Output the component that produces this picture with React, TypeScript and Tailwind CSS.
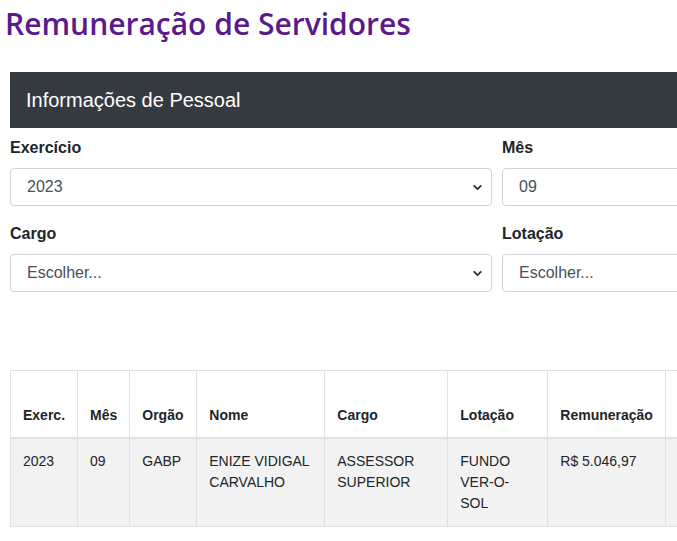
import { ChevronDown } from "lucide-react";

const rows = [
  {
    exerc: "2023",
    mes: "09",
    orgao: "GABP",
    nome: "ENIZE VIDIGAL CARVALHO",
    cargo: "ASSESSOR SUPERIOR",
    lotacao: "FUNDO VER-O-SOL",
    remuneracao: "R$ 5.046,97",
  },
];

function FakeSelect({ value }: { value: string }) {
  return (
    <div className="flex h-[38px] w-[482px] items-center justify-between rounded-[4px] border border-[#ced4da] bg-white pl-[16px] pr-[7px] text-[16px] text-[#495057]">
      <span>{value}</span>
      <ChevronDown className="h-[13px] w-[13px] text-[#333]" strokeWidth={3.5} />
    </div>
  );
}

function Field({ label, value }: { label: string; value: string }) {
  return (
    <div className="flex flex-col">
      <label className="mb-[8px] text-[16px] font-bold leading-[24px] text-[#212529]">
        {label}
      </label>
      <FakeSelect value={value} />
    </div>
  );
}

export default function App() {
  return (
    <div className="h-[541px] w-[677px] overflow-hidden bg-white font-['Liberation_Sans',Arial,sans-serif] text-[#212529]">
      <h1 className="ml-[5px] pt-[5px] font-['Open_Sans',sans-serif] text-[30px] font-semibold leading-[38px] text-[#5a1a8c]">
        Remuneração de Servidores
      </h1>

      <div className="ml-[10px] mt-[29px] w-[1000px]">
        <div className="flex h-[56px] items-center bg-[#343a40] px-[16px] text-[20px] text-white">
          Informações de Pessoal
        </div>

        <div className="mt-[8px] grid grid-cols-[482px_482px] gap-x-[10px] gap-y-[16px]">
          <Field label="Exercício" value="2023" />
          <Field label="Mês" value="09" />
          <Field label="Cargo" value="Escolher..." />
          <Field label="Lotação" value="Escolher..." />
        </div>

        <table className="mt-[78px] border-collapse text-[14px] leading-[21px]">
          <thead>
            <tr className="h-[67px] bg-white">
              <th className="w-[67px] border border-b-2 border-[#dee2e6] px-[12px] pb-[11px] text-left align-bottom">Exerc.</th>
              <th className="w-[52px] border border-b-2 border-[#dee2e6] px-[12px] pb-[11px] text-left align-bottom">Mês</th>
              <th className="w-[67px] border border-b-2 border-[#dee2e6] px-[12px] pb-[11px] text-left align-bottom">Orgão</th>
              <th className="w-[128px] border border-b-2 border-[#dee2e6] px-[12px] pb-[11px] text-left align-bottom">Nome</th>
              <th className="w-[123px] border border-b-2 border-[#dee2e6] px-[12px] pb-[11px] text-left align-bottom">Cargo</th>
              <th className="w-[100px] border border-b-2 border-[#dee2e6] px-[12px] pb-[11px] text-left align-bottom">Lotação</th>
              <th className="w-[118px] border border-b-2 border-[#dee2e6] px-[12px] pb-[11px] text-left align-bottom">Remuneração</th>
              <th className="w-[120px] border border-b-2 border-[#dee2e6] px-[12px] pb-[11px] text-left align-bottom"></th>
            </tr>
          </thead>
          <tbody>
            {rows.map((r) => (
              <tr key={r.nome} className="h-[89px] bg-[#f2f2f2]">
                <td className="border border-[#dee2e6] px-[12px] pt-[12px] align-top">{r.exerc}</td>
                <td className="border border-[#dee2e6] px-[12px] pt-[12px] align-top">{r.mes}</td>
                <td className="border border-[#dee2e6] px-[12px] pt-[12px] align-top">{r.orgao}</td>
                <td className="border border-[#dee2e6] px-[12px] pt-[12px] align-top">{r.nome}</td>
                <td className="border border-[#dee2e6] px-[12px] pt-[12px] align-top">{r.cargo}</td>
                <td className="border border-[#dee2e6] px-[12px] pt-[12px] align-top">
                  FUNDO
                  <br />
                  VER-O-
                  <br />
                  SOL
                </td>
                <td className="border border-[#dee2e6] px-[12px] pt-[12px] align-top">{r.remuneracao}</td>
                <td className="border border-[#dee2e6] px-[12px] pt-[12px] align-top"></td>
              </tr>
            ))}
          </tbody>
        </table>
      </div>
    </div>
  );
}
